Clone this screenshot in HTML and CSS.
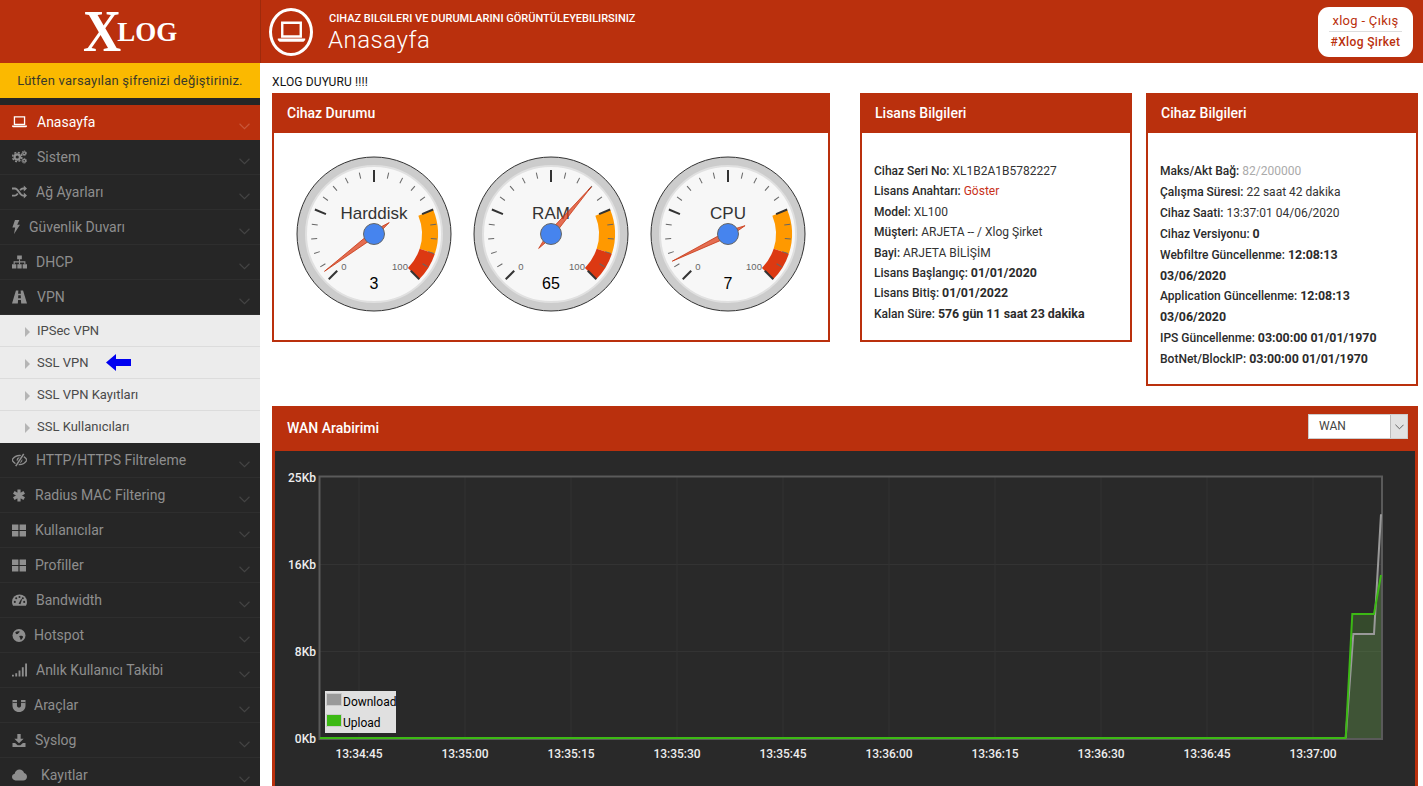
FILE: index.html
```html
<!DOCTYPE html>
<html lang="tr">
<head>
<meta charset="utf-8">
<title>XLOG - Anasayfa</title>
<link rel="stylesheet" href="styles.css">
</head>
<body>
<svg class="sprite" xmlns="http://www.w3.org/2000/svg">
  <symbol id="i-laptop" viewBox="0 0 16 14"><path d="M2.6 1.6h10.8v8H2.6z" fill="none" stroke="currentColor" stroke-width="1.4"/><path d="M0 10.8h16v.9l-1 1H1l-1-1z" fill="currentColor"/></symbol>
  <symbol id="i-gears" viewBox="0 0 16 14"><g fill="none" stroke="currentColor"><circle cx="5.6" cy="7" r="2.9" stroke-width="2.4"/><circle cx="5.6" cy="7" r="4.9" stroke-width="1.6" stroke-dasharray="2.2 1.65"/><circle cx="13" cy="3" r="1.5" stroke-width="1.4"/><circle cx="13" cy="3" r="2.5" stroke-width="1" stroke-dasharray="1.2 .9"/><circle cx="13" cy="11" r="1.5" stroke-width="1.4"/><circle cx="13" cy="11" r="2.5" stroke-width="1" stroke-dasharray="1.2 .9"/></g></symbol>
  <symbol id="i-shuffle" viewBox="0 0 16 14"><path d="M0 3.2h3.2c3.6 0 5 7.6 8.6 7.6H13M0 10.800h3.200c1.300 0 2.200-1 3-2.200M8.600 5.200c.8-1.100 1.800-2 3.200-2H13" fill="none" stroke="currentColor" stroke-width="2"/><path d="M12.600 0 16 3.200l-3.400 3.200zM12.600 7.600l3.400 3.200-3.400 3.200z" fill="currentColor"/></symbol>
  <symbol id="i-bolt" viewBox="0 0 8 14"><path d="M3 0h4.400L5.200 4.800H8L2 14l1.200-6.400H.4z" fill="currentColor"/></symbol>
  <symbol id="i-sitemap" viewBox="0 0 16 14"><path d="M5.500 0h5v4h-5zM0 9.500h4.600V14H0zM5.700 9.500h4.600V14H5.700zM11.400 9.500H16V14h-4.600z" fill="currentColor"/><path d="M8 4v5.500M2.300 9.500V6.800h11.400v2.700" fill="none" stroke="currentColor" stroke-width="1.200"/></symbol>
  <symbol id="i-road" viewBox="0 0 16 14"><path d="M4.200 0h2.600l-.3 3.500h3L9.200 0h2.600L16 14H9.800l-.3-3.800h-3L6.200 14H0zM6.700 5.200l-.2 3.200h3l-.2-3.200z" fill="currentColor" fill-rule="evenodd"/></symbol>
  <symbol id="i-eye" viewBox="0 0 16 14"><path d="M0 7c2-3.200 4.800-4.800 8-4.800S14 3.800 16 7c-2 3.200-4.800 4.800-8 4.800S2 10.200 0 7z" fill="none" stroke="currentColor" stroke-width="1.500"/><circle cx="8" cy="7" r="3" fill="currentColor"/><path d="M12.500.5 4 13.500" stroke="#262626" stroke-width="3.400"/><path d="M12.500.5 4 13.500" stroke="currentColor" stroke-width="1.700"/></symbol>
  <symbol id="i-star" viewBox="0 0 14 14"><path d="M7 .5v13M1.400 3.700l11.200 6.600M12.600 3.700 1.400 10.300" fill="none" stroke="currentColor" stroke-width="3.400"/></symbol>
  <symbol id="i-grid" viewBox="0 0 14 12"><path d="M0 0h6.400v5.400H0zM7.600 0H14v5.400H7.600zM0 6.600h6.400V12H0zM7.600 6.600H14V12H7.600z" fill="currentColor"/></symbol>
  <symbol id="i-tacho" viewBox="0 0 16 14"><path d="M8 1a8 8 0 0 1 8 8c0 1.600-.4 2.900-1.200 4.200H1.200C.4 11.900 0 10.600 0 9a8 8 0 0 1 8-8z" fill="currentColor"/><g fill="#262626"><circle cx="3" cy="9" r="1.100"/><circle cx="4.500" cy="5.200" r="1.100"/><circle cx="8" cy="3.800" r="1.100"/><circle cx="11.500" cy="5.200" r="1.100"/><circle cx="13" cy="9" r="1.100"/><path d="m7 11 2.800-5 .9.400L9 11.500z"/></g></symbol>
  <symbol id="i-globe" viewBox="0 0 14 14"><circle cx="7" cy="7" r="7" fill="currentColor"/><path d="M3 3.500c1.200-1 3-1.500 4.500-1 .6.800-.5 1.500-1.200 2C6 5.500 5 5.200 4 5.600c-.5-.7-.7-1.300-1-2.100zM7.500 7.500c1.400-.6 3.300-.4 3.800.6.200 1.200-1 2.900-2.300 3.800-.8-1-.5-2-1-2.700-.5-.6-.9-1.200-.5-1.700z" fill="#262626"/></symbol>
  <symbol id="i-signal" viewBox="0 0 16 14"><path d="M0 12h2v2H0zM3.500 10.500h2V14h-2zM7 7.500h2V14H7zM10.500 4h2v10h-2zM14 0h2v14h-2z" fill="currentColor"/></symbol>
  <symbol id="i-magnet" viewBox="0 0 14 14"><path d="M0 1h4.800v6c0 2.900 4.400 2.900 4.400 0V1H14v6.200C14 11 11 14 7 14S0 11 0 7.200z" fill="currentColor"/><path d="M0 3.800h4.800M9.200 3.800H14" stroke="#262626" stroke-width=".9"/></symbol>
  <symbol id="i-download" viewBox="0 0 14 14"><path d="M5.200 0h3.600v5H12L7 10 2 5h3.200zM0 9.800h2.800L5.500 12h3l2.700-2.200H14V14H0z" fill="currentColor"/></symbol>
  <symbol id="i-cloud" viewBox="0 0 18 13"><path d="M4.200 13C1.800 13 0 11.200 0 9c0-2 1.300-3.500 3.200-3.900C3.600 2.200 6 0 9 0c2.600 0 4.800 1.600 5.500 4 2 .5 3.500 2.300 3.500 4.500 0 2.500-2 4.500-4.500 4.500z" fill="currentColor"/></symbol>
  <symbol id="i-chev" viewBox="0 0 10 6"><path d="M.5.500 5 5 9.500.5" fill="none" stroke="currentColor"/></symbol>
  <symbol id="gface" viewBox="-80 -80 160 160">
    <circle r="77" fill="#ccc" stroke="#333"/>
    <circle r="68" fill="#f7f7f7" stroke="#e0e0e0" stroke-width="2"/>
    <path d="M59.130-24.490A64 64 0 0 1 60.870 19.780L45.650 14.830A48 48 0 0 0 44.350-18.370z" fill="#f90"/>
    <path d="M60.870 19.780A64 64 0 0 1 45.250 45.250L33.940 33.940A48 48 0 0 0 45.650 14.830z" fill="#dc3912"/>
    <g stroke="#666" stroke-width="1" fill="none">
      <path d="M0-63v6" transform="rotate(-121.500)"/>
      <path d="M0-63v6" transform="rotate(-108)"/><path d="M0-63v6" transform="rotate(-94.500)"/><path d="M0-63v6" transform="rotate(-81)"/>
      <path d="M0-63v6" transform="rotate(-54)"/><path d="M0-63v6" transform="rotate(-40.500)"/><path d="M0-63v6" transform="rotate(-27)"/><path d="M0-63v6" transform="rotate(-13.500)"/>
      <path d="M0-63v6" transform="rotate(13.500)"/><path d="M0-63v6" transform="rotate(27)"/><path d="M0-63v6" transform="rotate(40.500)"/><path d="M0-63v6" transform="rotate(54)"/>
      <path d="M0-63v6" transform="rotate(81)"/><path d="M0-63v6" transform="rotate(94.500)"/><path d="M0-63v6" transform="rotate(108)"/><path d="M0-63v6" transform="rotate(121.500)"/>
    </g>
    <g stroke="#333" stroke-width="2" fill="none">
      <path d="M0-64v12" transform="rotate(-135)"/><path d="M0-64v12" transform="rotate(-67.500)"/><path d="M0-64v12"/><path d="M0-64v12" transform="rotate(67.500)"/><path d="M0-64v12" transform="rotate(135)"/>
    </g>
  </symbol>
</svg>

<div class="app">
  <header class="topbar">
    <div class="brand"><span class="brand-x">X</span><span class="brand-log">LOG</span></div>
    <div class="page-head">
      <div class="page-icon"><svg class="page-icon-svg"><use href="#i-laptop"/></svg></div>
      <div class="page-titles">
        <div class="page-sub">CIHAZ BILGILERI VE DURUMLARINI GÖRÜNTÜLEYEBILIRSINIZ</div>
        <div class="page-title">Anasayfa</div>
      </div>
    </div>
    <div class="userbox">
      <div class="user-name">xlog - Çıkış</div>
      <div class="user-org">#Xlog Şirket</div>
    </div>
  </header>

  <div class="layout">
    <nav class="sidebar">
      <div class="notice">Lütfen varsayılan şifrenizi değiştiriniz.</div>
      <div class="notice-gap"></div>
      <a class="item active"><span class="ibox w25"><svg class="ico"><use href="#i-laptop"/></svg></span>Anasayfa<svg class="chev"><use href="#i-chev"/></svg></a>
      <a class="item"><span class="ibox w25"><svg class="ico"><use href="#i-gears"/></svg></span>Sistem<svg class="chev"><use href="#i-chev"/></svg></a>
      <a class="item"><span class="ibox w24"><svg class="ico"><use href="#i-shuffle"/></svg></span>Ağ Ayarları<svg class="chev"><use href="#i-chev"/></svg></a>
      <a class="item"><span class="ibox w17"><svg class="ico narrow"><use href="#i-bolt"/></svg></span>Güvenlik Duvarı<svg class="chev"><use href="#i-chev"/></svg></a>
      <a class="item"><span class="ibox w24"><svg class="ico"><use href="#i-sitemap"/></svg></span>DHCP<svg class="chev"><use href="#i-chev"/></svg></a>
      <a class="item"><span class="ibox w25"><svg class="ico"><use href="#i-road"/></svg></span>VPN<svg class="chev"><use href="#i-chev"/></svg></a>
      <div class="submenu">
        <a class="subitem"><span class="tri"></span>IPSec VPN</a>
        <a class="subitem"><span class="tri"></span>SSL VPN<svg class="blue-arrow" viewBox="0 0 25 17"><path d="M0 8.500 10 0v5h15v7H10v5z" fill="#0000f0"/></svg></a>
        <a class="subitem"><span class="tri"></span>SSL VPN Kayıtları</a>
        <a class="subitem"><span class="tri"></span>SSL Kullanıcıları</a>
      </div>
      <a class="item"><span class="ibox w24"><svg class="ico"><use href="#i-eye"/></svg></span>HTTP/HTTPS Filtreleme<svg class="chev"><use href="#i-chev"/></svg></a>
      <a class="item"><span class="ibox w23"><svg class="ico small"><use href="#i-star"/></svg></span>Radius MAC Filtering<svg class="chev"><use href="#i-chev"/></svg></a>
      <a class="item"><span class="ibox w23"><svg class="ico small"><use href="#i-grid"/></svg></span>Kullanıcılar<svg class="chev"><use href="#i-chev"/></svg></a>
      <a class="item"><span class="ibox w23"><svg class="ico small"><use href="#i-grid"/></svg></span>Profiller<svg class="chev"><use href="#i-chev"/></svg></a>
      <a class="item"><span class="ibox w24"><svg class="ico"><use href="#i-tacho"/></svg></span>Bandwidth<svg class="chev"><use href="#i-chev"/></svg></a>
      <a class="item"><span class="ibox w22"><svg class="ico small"><use href="#i-globe"/></svg></span>Hotspot<svg class="chev"><use href="#i-chev"/></svg></a>
      <a class="item"><span class="ibox w24"><svg class="ico"><use href="#i-signal"/></svg></span>Anlık Kullanıcı Takibi<svg class="chev"><use href="#i-chev"/></svg></a>
      <a class="item"><span class="ibox w22"><svg class="ico small"><use href="#i-magnet"/></svg></span>Araçlar<svg class="chev"><use href="#i-chev"/></svg></a>
      <a class="item"><span class="ibox w23"><svg class="ico small"><use href="#i-download"/></svg></span>Syslog<svg class="chev"><use href="#i-chev"/></svg></a>
      <a class="item"><span class="ibox w29"><svg class="ico"><use href="#i-cloud"/></svg></span>Kayıtlar<svg class="chev"><use href="#i-chev"/></svg></a>
    </nav>

    <main class="content">
      <div class="announce">XLOG DUYURU !!!!</div>
      <div class="panels">
        <section class="panel panel-status">
          <h2 class="panel-head">Cihaz Durumu</h2>
          <div class="gauges">
            <svg class="gauge" viewBox="-80 -80 160 160">
              <use href="#gface" x="-80" y="-80" width="160" height="160"/>
              <text class="g-label" y="-15">Harddisk</text>
              <text class="g-tick" x="-30" y="36">0</text>
              <text class="g-tick" x="26" y="36">100</text>
              <text class="g-value" y="55">3</text>
              <path class="g-needle" d="M0-62 3 0 0 19-3 0z" transform="rotate(-127)"/>
              <circle class="g-hub" r="10.500"/>
            </svg>
            <svg class="gauge" viewBox="-80 -80 160 160">
              <use href="#gface" x="-80" y="-80" width="160" height="160"/>
              <text class="g-label" y="-15">RAM</text>
              <text class="g-tick" x="-30" y="36">0</text>
              <text class="g-tick" x="26" y="36">100</text>
              <text class="g-value" y="55">65</text>
              <path class="g-needle" d="M0-62 3 0 0 19-3 0z" transform="rotate(40.500)"/>
              <circle class="g-hub" r="10.500"/>
            </svg>
            <svg class="gauge" viewBox="-80 -80 160 160">
              <use href="#gface" x="-80" y="-80" width="160" height="160"/>
              <text class="g-label" y="-15">CPU</text>
              <text class="g-tick" x="-30" y="36">0</text>
              <text class="g-tick" x="26" y="36">100</text>
              <text class="g-value" y="55">7</text>
              <path class="g-needle" d="M0-62 3 0 0 19-3 0z" transform="rotate(-116)"/>
              <circle class="g-hub" r="10.500"/>
            </svg>
          </div>
        </section>

        <section class="panel panel-license">
          <h2 class="panel-head">Lisans Bilgileri</h2>
          <ul class="info info-license">
            <li><span class="k">Cihaz Seri No:</span> XL1B2A1B5782227</li>
            <li><span class="k">Lisans Anahtarı:</span> <span class="link">Göster</span></li>
            <li><span class="k">Model:</span> XL100</li>
            <li><span class="k">Müşteri:</span> ARJETA -- / Xlog Şirket</li>
            <li><span class="k">Bayi:</span> ARJETA BİLİŞİM</li>
            <li><span class="k">Lisans Başlangıç:</span> <b>01/01/2020</b></li>
            <li><span class="k">Lisans Bitiş:</span> <b>01/01/2022</b></li>
            <li><span class="k">Kalan Süre:</span> <b>576 gün 11 saat 23 dakika</b></li>
          </ul>
        </section>

        <section class="panel panel-device">
          <h2 class="panel-head">Cihaz Bilgileri</h2>
          <ul class="info info-device">
            <li><span class="k">Maks/Akt Bağ:</span> <span class="muted">82/200000</span></li>
            <li><span class="k">Çalışma Süresi:</span> 22 saat 42 dakika</li>
            <li><span class="k">Cihaz Saati:</span> 13:37:01 04/06/2020</li>
            <li><span class="k">Cihaz Versiyonu:</span> <b>0</b></li>
            <li><span class="k">Webfiltre Güncellenme:</span> <b>12:08:13 03/06/2020</b></li>
            <li><span class="k">Application Güncellenme:</span> <b>12:08:13 03/06/2020</b></li>
            <li><span class="k">IPS Güncellenme:</span> <b>03:00:00 01/01/1970</b></li>
            <li><span class="k">BotNet/BlockIP:</span> <b>03:00:00 01/01/1970</b></li>
          </ul>
        </section>
      </div>

      <section class="panel panel-wan">
        <div class="wan-head">
          <h2 class="wan-title">WAN Arabirimi</h2>
          <div class="select"><span class="select-value">WAN</span><span class="select-btn"><svg class="select-chev"><use href="#i-chev"/></svg></span></div>
        </div>
        <svg class="chart" viewBox="275 451 1140 340" preserveAspectRatio="xMinYMin meet">
          <g class="grid">
            <path d="M320 564.500H1382M320 651.500H1382"/>
            <path d="M359 477V738M465 477V738M571 477V738M677 477V738M783 477V738M889 477V738M995 477V738M1101 477V738M1207 477V738M1313 477V738"/>
          </g>
          <path class="axis" d="M319.500 739V476.500H1382V739z"/>
          <path class="fill-grey" d="M1345.700 738 1353.300 634H1374L1381 514.300V738z"/>
          <path class="fill-green" d="M1345.700 738 1352.300 614H1374L1381 575V738z"/>
          <path class="line-grey" d="M1345.700 738 1353.300 634H1374L1381 514.300"/>
          <path class="line-green" d="M320 738H1345.700L1352.300 614H1374L1381 575"/>
          <g class="y-labels">
            <text x="316" y="482">25Kb</text><text x="316" y="569">16Kb</text><text x="316" y="656">8Kb</text><text x="316" y="743">0Kb</text>
          </g>
          <g class="x-labels">
            <text x="359" y="758">13:34:45</text><text x="465" y="758">13:35:00</text><text x="571" y="758">13:35:15</text><text x="677" y="758">13:35:30</text><text x="783" y="758">13:35:45</text><text x="889" y="758">13:36:00</text><text x="995" y="758">13:36:15</text><text x="1101" y="758">13:36:30</text><text x="1207" y="758">13:36:45</text><text x="1313" y="758">13:37:00</text>
          </g>
          <rect class="lg-bg" x="325" y="691" width="71" height="42"/>
          <rect class="lg-frame" x="326.500" y="693.500" width="15" height="12"/>
          <rect class="lg-grey" x="327" y="694" width="14" height="11"/>
          <rect class="lg-frame" x="326.500" y="714.500" width="15" height="12"/>
          <rect class="lg-green" x="327" y="715" width="14" height="11"/>
          <text class="lg-text" x="343" y="706">Download</text>
          <text class="lg-text" x="343" y="727">Upload</text>
        </svg>
      </section>
    </main>
  </div>
</div>
</body>
</html>
```

FILE: styles.css
```css
* { box-sizing: border-box; }
html, body { margin: 0; height: 100%; overflow: hidden; background: #fff; }
body { font-family: Roboto, "Liberation Sans", Arial, sans-serif; color: #333; font-size: 12px; }
.sprite { display: none; }
.app { display: flex; flex-direction: column; height: 786px; overflow: hidden; }

.topbar { flex: 0 0 63px; height: 63px; min-height: 0; display: flex; align-items: stretch; background: #ba300d; color: #fff; overflow: hidden; }
.brand { flex: 0 0 261px; height: 63px; padding-top: 2px; text-align: center; border-right: 1px solid #9e2a0c; font-family: "Liberation Serif", "Times New Roman", serif; color: #fff; line-height: 59px; white-space: nowrap; }
.brand-x { display: inline-block; font-size: 60px; font-weight: 700; margin-right: -9px; transform: scaleX(.88); transform-origin: left center; }
.brand-log { font-size: 27px; font-weight: 700; vertical-align: 10px; }
.page-head { flex: 1; display: flex; align-items: center; padding-left: 8px; }
.page-icon { width: 44px; height: 48px; border: 3px solid #fff; border-radius: 50%; display: flex; align-items: center; justify-content: center; margin-right: 16px; flex: none; }
.page-icon-svg { width: 31px; height: 24px; color: #fff; }
.page-titles { display: flex; flex-direction: column; margin-top: 2px; }
.page-sub { font-size: 11px; line-height: 14px; font-weight: 500; }
.page-title { font-size: 24px; line-height: 28px; font-weight: 300; letter-spacing: .5px; margin-left: -1px; }
.userbox { align-self: flex-start; width: 95px; height: 50px; margin: 7px 10px 0 0; background: #fff; border-radius: 11px; text-align: center; padding: 5px 11px 0; color: #ba300d; flex: none; }
.user-name { font-size: 13px; line-height: 18px; letter-spacing: .3px; padding-bottom: 1px; border-bottom: 1px solid #ddd; white-space: nowrap; }
.user-org { font-size: 12px; line-height: 18px; font-weight: 500; letter-spacing: .35px; white-space: nowrap; margin: 1px -2px 0; }

.layout { flex: 1; display: flex; min-height: 0; }
.sidebar { flex: 0 0 260px; background: #262626; overflow: hidden; }
.notice { height: 35px; background: #fbb900; color: #3a3a2a; font-size: 13px; letter-spacing: .22px; line-height: 35px; text-align: center; }
.notice-gap { height: 7px; }
.item { display: flex; align-items: center; height: 35px; padding: 0 10px 0 12px; color: #8e8e8e; font-size: 14px; border-bottom: 1px solid #2e2e2e; }
.item.active { background: #ba300d; color: #fff; border-bottom-color: #ba300d; }
.ibox { display: flex; align-items: center; flex: none; }
.w17 { width: 17px; } .w22 { width: 22px; } .w23 { width: 23px; } .w24 { width: 24px; } .w25 { width: 25px; } .w29 { width: 29px; }
.ico { width: 15px; height: 14px; }
.ico.narrow { width: 8px; }
.ico.small { width: 14px; height: 13px; }
.chev { width: 11px; height: 7px; margin-left: auto; margin-top: 9px; color: #444; flex: none; }
.item.active .chev { color: #c9573a; }
.submenu { background: #ececec; }
.subitem { display: flex; align-items: center; height: 32px; padding: 0 0 1px 25px; color: #4a4a4a; font-size: 13px; border-bottom: 1px solid #dcdcdc; }
.subitem:last-child { border-bottom: 0; padding-bottom: 2px; }
.tri { width: 0; height: 0; border-left: 5px solid #b5b5b5; border-top: 5px solid transparent; border-bottom: 5px solid transparent; margin: 3px 7px 0 0; }
.blue-arrow { width: 25px; height: 17px; margin-left: 18px; }

.content { flex: 1; min-width: 0; padding: 12px 5px 0 12px; }
.announce { font-size: 12px; line-height: 15px; letter-spacing: .15px; color: #111; margin-bottom: 3px; }
.panels { display: flex; align-items: flex-start; margin-bottom: 20px; }
.panel { border: 2px solid #ba300d; background: #fff; }
.panel-head { margin: 0; height: 38px; background: #ba300d; color: #fff; font-size: 14px; font-weight: 500; line-height: 36px; padding-left: 13px; }
.panel-status { flex: 0 0 558px; margin-right: 30px; }
.panel-license { flex: 0 0 272px; margin-right: 14px; }
.panel-device { flex: 0 0 272px; }
.gauges { display: flex; gap: 17px; padding: 21px 0 26px 20px; }
.gauge { width: 160px; height: 160px; flex: none; }
.g-label { font-family: "Liberation Sans", Arial, sans-serif; font-size: 17px; text-anchor: middle; fill: #333; }
.g-tick { font-family: "Liberation Sans", Arial, sans-serif; font-size: 9.500px; text-anchor: middle; fill: #666; }
.g-value { font-family: "Liberation Sans", Arial, sans-serif; font-size: 16px; text-anchor: middle; fill: #000; }
.g-needle { fill: #dc3912; fill-opacity: .72; stroke: #c63310; stroke-width: .7px; }
.g-hub { fill: #4684ee; stroke: #666; stroke-width: 1px; }

.info { list-style: none; margin: 0; color: #333; font-size: 12px; }
.info-license { padding: 28px 12px 16px; line-height: 20.400px; }
.info-device { padding: 28px 16px 14px 12px; line-height: 20.900px; }
.k { font-weight: 500; color: #2b2b2b; }
.info b { font-size: 12.400px; font-weight: 700; color: #2b2b2b; }
.link { color: #c8311a; }
.muted { color: #aaa; }

.panel-wan { border-width: 0 3px; border-color: #ba300d; background: #292929; height: 380px; }
.wan-head { display: flex; align-items: center; justify-content: space-between; height: 45px; margin: 0 -3px; background: #ba300d; padding: 0 10px 2px 15px; }
.wan-title { margin: 0; font-size: 14px; font-weight: 500; color: #fff; }
.select { width: 100px; height: 25px; margin-top: -2px; display: flex; background: #fff; border: 1px solid #ccc; }
.select-value { flex: 1; font-size: 12px; line-height: 23px; padding-left: 10px; color: #444; }
.select-btn { width: 17px; background: #e2e2e2; border-left: 1px solid #bbb; display: flex; align-items: center; justify-content: center; }
.select-chev { width: 9px; height: 6px; color: #555; }

.chart { display: block; width: 1140px; height: 340px; }
.grid path { fill: none; stroke: #333; stroke-width: 1px; }
.axis { fill: none; stroke: #5a5a5a; stroke-width: 2px; }
.fill-grey { fill: #999; fill-opacity: .12; }
.fill-green { fill: #5fbf38; fill-opacity: .22; }
.line-grey { fill: none; stroke: #999; stroke-width: 2px; }
.line-green { fill: none; stroke: #3cb914; stroke-width: 2px; }
.y-labels text { font-size: 12px; font-weight: 500; fill: #eee; text-anchor: end; }
.x-labels text { font-size: 12px; font-weight: 500; fill: #eee; text-anchor: middle; }
.lg-bg { fill: #e0e0e0; }
.lg-frame { fill: none; stroke: #ccc; stroke-width: 1px; }
.lg-grey { fill: #999; }
.lg-green { fill: #3cb914; }
.lg-text { font-size: 12px; fill: #000; }
```
